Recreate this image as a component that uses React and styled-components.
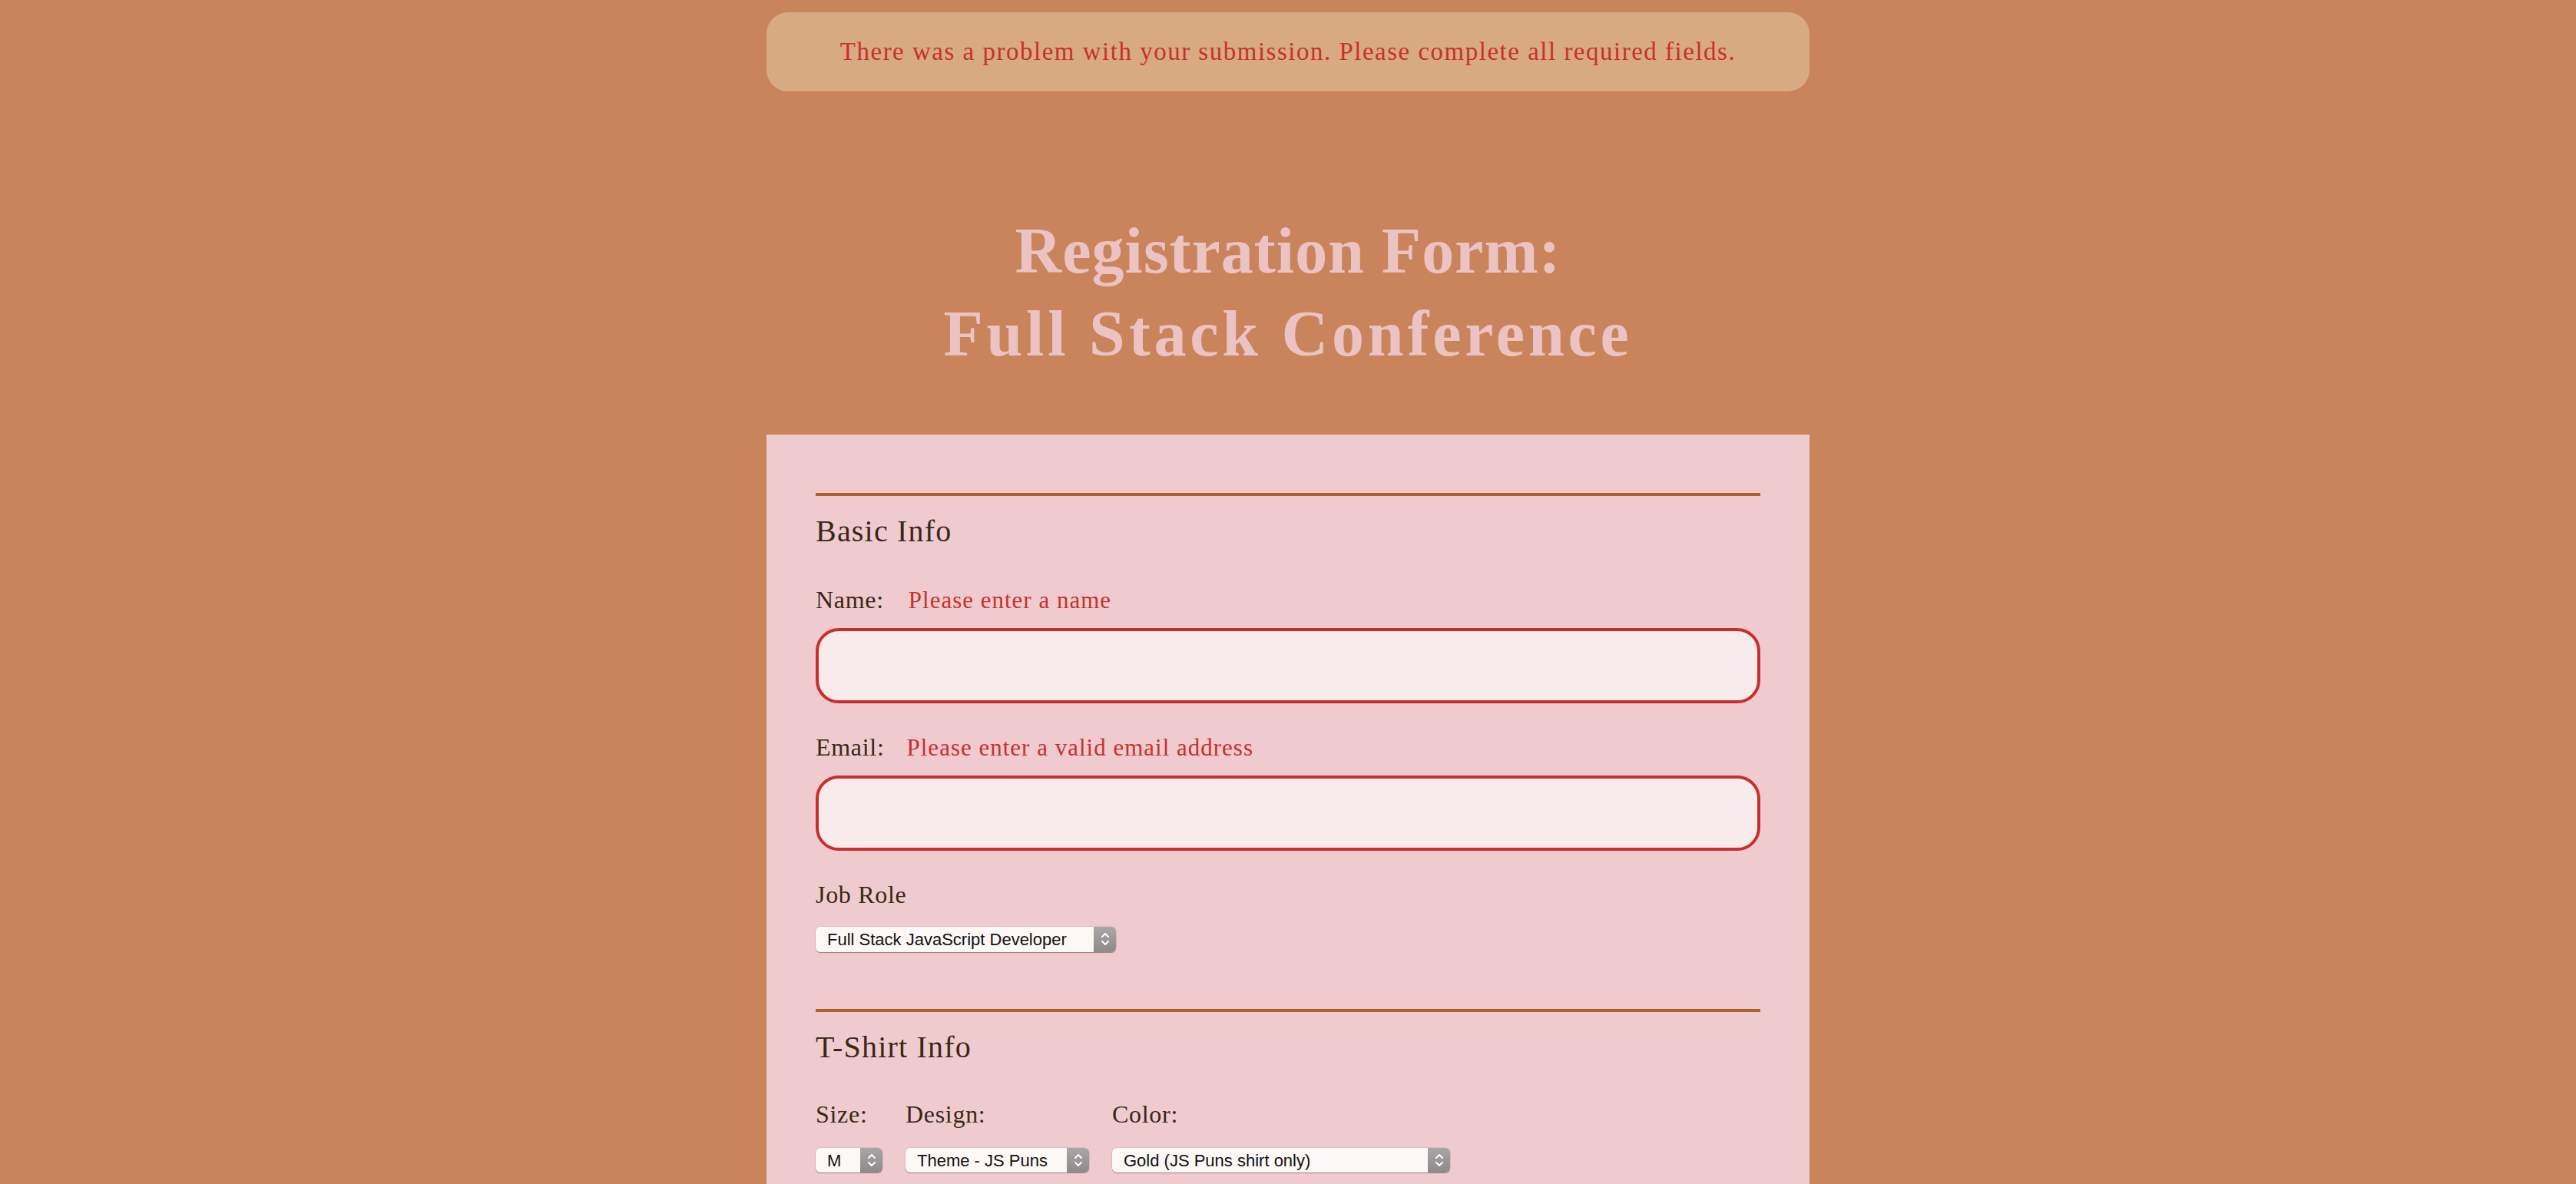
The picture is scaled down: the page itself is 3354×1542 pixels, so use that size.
import React from "react";
import styled, { createGlobalStyle } from "styled-components";

const Global = createGlobalStyle`
  html, body { margin: 0; padding: 0; }
  body {
    background: #c9845c;
    font-family: "Liberation Serif", "DejaVu Serif", serif;
    color: #3a2815;
  }
`;

const Page = styled.div`
  width: 1358px;
  margin: 0 auto;
  padding-top: 16px;
  display: flex;
  flex-direction: column;
`;

const Banner = styled.div`
  height: 103px;
  border-radius: 28px;
  background: #d8aa84;
  display: flex;
  align-items: center;
  justify-content: center;
  color: #c9302c;
  font-size: 33px;
  line-height: 33px;
  letter-spacing: 1.5px;
`;

const Title = styled.h1`
  margin: 154px 0 77px;
  text-align: center;
  font-size: 84px;
  line-height: 108px;
  font-weight: 700;
  color: #ebc3c3;
`;

const TitleLine = styled.span`
  display: block;
  letter-spacing: ${(p) => p.$ls}px;
`;

const Panel = styled.form`
  background: #efcbcf;
  padding: 76px 64px 120px;
  display: flex;
  flex-direction: column;
`;

const Fieldset = styled.fieldset`
  border: 0;
  border-top: 4px solid #b0612a;
  margin: 0;
  padding: 0;
  display: flex;
  flex-direction: column;
  & + & { margin-top: 74px; }
`;

const Legend = styled.h2`
  margin: 22px 0 0;
  font-size: 40px;
  line-height: 48px;
  font-weight: 400;
  color: #3a2815;
  letter-spacing: 1.2px;
`;

const LabelRow = styled.div`
  display: flex;
  align-items: baseline;
  gap: ${(p) => p.$gap || 32}px;
  margin-top: ${(p) => p.$top}px;
`;

const Label = styled.label`
  font-size: 32px;
  line-height: 40px;
  color: #3a2815;
  letter-spacing: 0.7px;
`;

const ErrorText = styled.span`
  font-size: 31px;
  line-height: 40px;
  color: #c9302c;
  letter-spacing: 1px;
`;

const TextInput = styled.input`
  box-sizing: border-box;
  width: 100%;
  height: 98px;
  margin-top: 16px;
  border: 4px solid #c9302c;
  border-radius: 30px;
  background: #f7ebeb;
  font: inherit;
  font-size: 32px;
  padding: 0 24px;
  outline: none;
`;

const SelectWrap = styled.div`
  position: relative;
  width: ${(p) => p.$w}px;
  height: ${(p) => p.$h || 33}px;
  margin-top: ${(p) => p.$top || 0}px;
  border-radius: 6px;
  box-shadow: 0 1px 1px rgba(90, 50, 50, 0.45), 0 0 0 0.5px rgba(120, 80, 80, 0.25);
  background: #fcf8f6;
  overflow: hidden;
`;

const NativeSelect = styled.select`
  appearance: none;
  -webkit-appearance: none;
  box-sizing: border-box;
  width: 100%;
  height: 100%;
  border: 0;
  margin: 0;
  background: transparent;
  padding: 0 34px 0 15px;
  font-family: "Liberation Sans", Arial, sans-serif;
  font-size: 22px;
  color: #111;
  outline: none;
`;

const ArrowBox = styled.span`
  position: absolute;
  top: 0;
  right: 0;
  bottom: 0;
  width: 29px;
  background: linear-gradient(#aaa5a7, #8e898b);
  display: flex;
  align-items: center;
  justify-content: center;
  pointer-events: none;
`;

const ShirtRow = styled.div`
  display: flex;
  gap: 30px;
  margin-top: 43.5px;
`;

const Column = styled.div`
  display: flex;
  flex-direction: column;
  gap: 24px;
`;

const Arrows = () => (
  <svg width="14" height="22" viewBox="0 0 14 22" fill="none" stroke="#fff" strokeWidth="2" strokeLinecap="round" strokeLinejoin="round">
    <path d="M3 8 L7 4 L11 8" />
    <path d="M3 14 L7 18 L11 14" />
  </svg>
);

const Select = ({ w, h, top, options, value }) => (
  <SelectWrap $w={w} $h={h} $top={top}>
    <NativeSelect defaultValue={value}>
      {options.map((o) => (
        <option key={o}>{o}</option>
      ))}
    </NativeSelect>
    <ArrowBox>
      <Arrows />
    </ArrowBox>
  </SelectWrap>
);

export default function App() {
  return (
    <>
      <Global />
      <Page>
        <Banner>There was a problem with your submission. Please complete all required fields.</Banner>
        <Title>
          <TitleLine $ls={1}>Registration Form:</TitleLine>
          <TitleLine $ls={4.8}>Full Stack Conference</TitleLine>
        </Title>
        <Panel onSubmit={(e) => e.preventDefault()}>
          <Fieldset>
            <Legend>Basic Info</Legend>
            <LabelRow $top={44.5}>
              <Label htmlFor="name">Name:</Label>
              <ErrorText>Please enter a name</ErrorText>
            </LabelRow>
            <TextInput id="name" type="text" />
            <LabelRow $top={37} $gap={29}>
              <Label htmlFor="mail">Email:</Label>
              <ErrorText>Please enter a valid email address</ErrorText>
            </LabelRow>
            <TextInput id="mail" type="email" />
            <LabelRow $top={37}>
              <Label htmlFor="title">Job Role</Label>
            </LabelRow>
            <Select
              w={391}
              top={22}
              value="Full Stack JavaScript Developer"
              options={["Full Stack JavaScript Developer", "Front End Developer", "Back End Developer", "Designer", "Student", "Other"]}
            />
          </Fieldset>
          <Fieldset>
            <Legend>T-Shirt Info</Legend>
            <ShirtRow>
              <Column>
                <Label>Size:</Label>
                <Select w={87} h={32} value="M" options={["S", "M", "L", "XL"]} />
              </Column>
              <Column>
                <Label>Design:</Label>
                <Select w={239} h={32} value="Theme - JS Puns" options={["Select Theme", "Theme - JS Puns", "Theme - I ♥ JS"]} />
              </Column>
              <Column>
                <Label>Color:</Label>
                <Select
                  w={440}
                  h={32}
                  value="Gold (JS Puns shirt only)"
                  options={["Cornflower Blue (JS Puns shirt only)", "Dark Slate Grey (JS Puns shirt only)", "Gold (JS Puns shirt only)"]}
                />
              </Column>
            </ShirtRow>
          </Fieldset>
        </Panel>
      </Page>
    </>
  );
}
